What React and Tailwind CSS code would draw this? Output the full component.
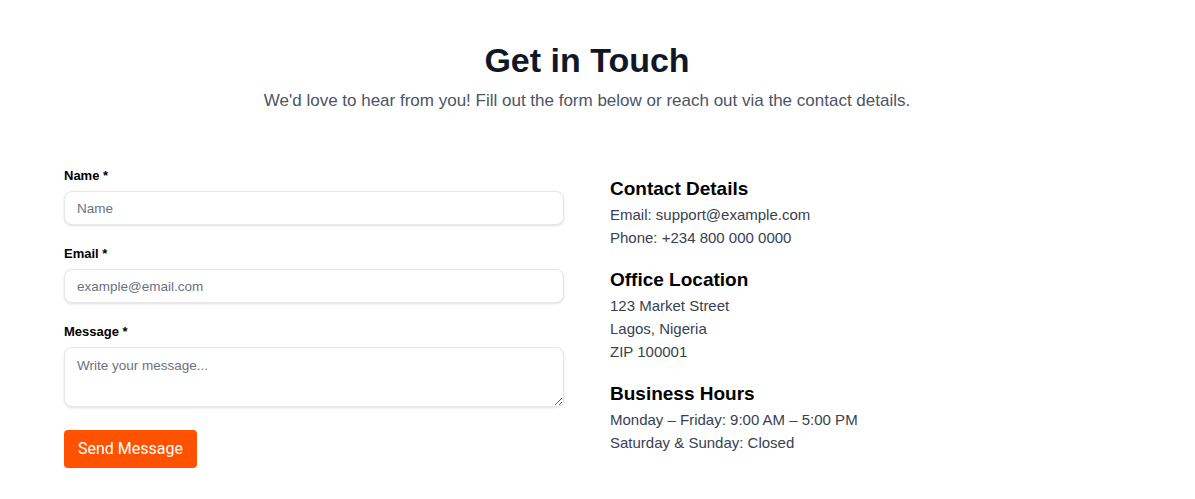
import React from 'react';

const Field = ({ label, children }) => (
  <div className="flex flex-col">
    <label className="text-[13px] leading-5 font-bold text-black mb-[5px]">{label}</label>
    {children}
  </div>
);

const InfoBlock = ({ title, lines }) => (
  <div>
    <h3 className="text-[19px] leading-7 font-bold text-black">{title}</h3>
    <div className="text-[15px] leading-[23px] text-gray-700">
      {lines.map((line) => (
        <p key={line}>{line}</p>
      ))}
    </div>
  </div>
);

export default function App() {
  const inputClass =
    "w-full h-[34px] rounded-lg border border-gray-200 bg-white px-3 text-[13.5px] text-gray-800 placeholder:text-gray-500 shadow-sm outline-none";

  return (
    <div className="min-h-screen bg-white font-['Liberation_Sans',Arial,sans-serif]">
      <div className="px-16 pt-10 pb-8">
        {/* Header */}
        <div className="text-center pr-[21px]">
          <h1 className="text-[34px] leading-10 font-bold text-gray-900">Get in Touch</h1>
          <p className="mt-[7px] text-[17px] leading-7 text-gray-600">
            We'd love to hear from you! Fill out the form below or reach out via the contact details.
          </p>
        </div>

        {/* Content */}
        <div className="mt-[51px] flex gap-[46px]">
          {/* Form */}
          <form className="w-[500px] flex flex-col gap-[19px]" onSubmit={(e) => e.preventDefault()}>
            <Field label="Name *">
              <input type="text" placeholder="Name" className={inputClass} />
            </Field>
            <Field label="Email *">
              <input type="email" placeholder="example@email.com" className={inputClass} />
            </Field>
            <Field label="Message *">
              <textarea
                placeholder="Write your message..."
                className="w-full h-[60px] rounded-lg border border-gray-200 bg-white px-3 py-2 text-[13.5px] text-gray-800 placeholder:text-gray-500 shadow-sm outline-none"
              />
            </Field>
            <div>
              <button
                type="submit"
                className="mt-[4px] h-[38px] px-[14px] rounded bg-[#ff5200] text-white text-base font-['Roboto',sans-serif]"
              >
                Send Message
              </button>
            </div>
          </form>

          {/* Contact info */}
          <div className="pt-[9px] flex flex-col gap-[17px]">
            <InfoBlock
              title="Contact Details"
              lines={["Email: support@example.com", "Phone: +234 800 000 0000"]}
            />
            <InfoBlock
              title="Office Location"
              lines={["123 Market Street", "Lagos, Nigeria", "ZIP 100001"]}
            />
            <InfoBlock
              title="Business Hours"
              lines={["Monday – Friday: 9:00 AM – 5:00 PM", "Saturday & Sunday: Closed"]}
            />
          </div>
        </div>
      </div>
    </div>
  );
}
